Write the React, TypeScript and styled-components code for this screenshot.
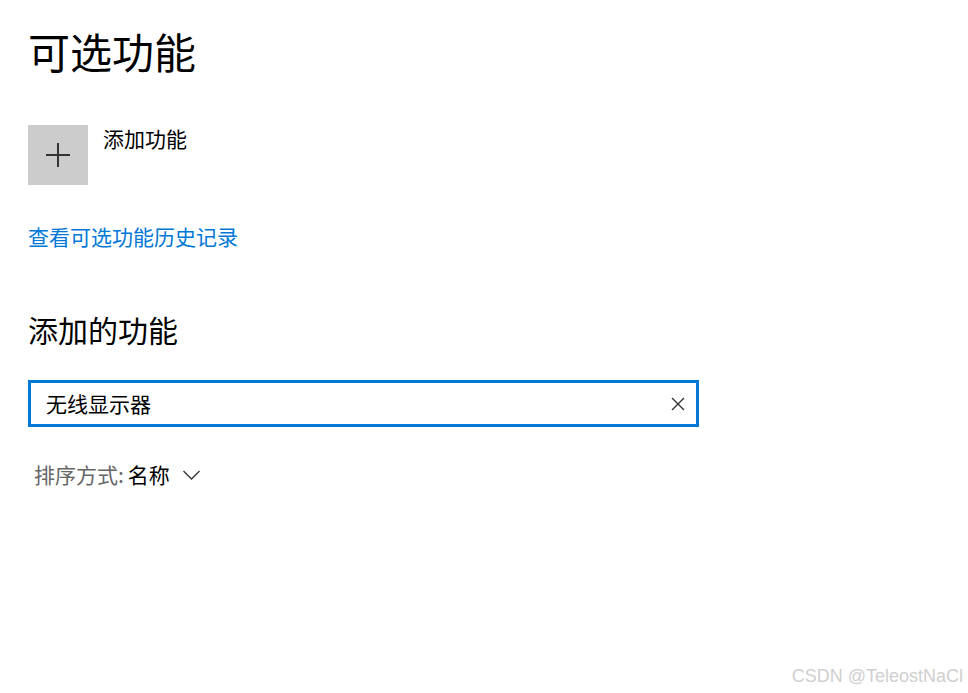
import React from "react";
import styled, { createGlobalStyle } from "styled-components";

const GlobalStyle = createGlobalStyle`
  html, body { margin: 0; padding: 0; background: #ffffff; }
  body {
    font-family: "Noto Sans CJK SC", "Noto Sans", sans-serif;
    color: #000000;
  }
`;

const Page = styled.div`
  position: relative;
  min-height: 100vh;
  box-sizing: border-box;
  padding: 30px 0 0 28px;
  display: flex;
  flex-direction: column;
  align-items: flex-start;
`;

const Title = styled.h1`
  margin: 0;
  font-size: 42px;
  line-height: 42px;
  font-weight: 400;
`;

const AddRow = styled.div`
  margin-top: 53px;
  display: flex;
  align-items: flex-start;
  gap: 15px;
`;

const AddTile = styled.div`
  width: 60px;
  height: 60px;
  background: #cccccc;
  display: flex;
  align-items: center;
  justify-content: center;
`;

const AddLabel = styled.span`
  margin-top: 3px;
  font-size: 21px;
  line-height: 21px;
`;

const HistoryLink = styled.a`
  margin-top: 41px;
  font-size: 21px;
  line-height: 21px;
  color: #0078d7;
  text-decoration: none;
  cursor: pointer;
`;

const Subtitle = styled.h2`
  margin: 67px 0 0;
  font-size: 30px;
  line-height: 30px;
  font-weight: 400;
`;

const SearchBox = styled.div`
  margin-top: 36px;
  width: 671px;
  height: 47px;
  box-sizing: border-box;
  border: 3px solid #0078d7;
  display: flex;
  align-items: center;
  padding: 0 11px 0 15px;
`;

const SearchText = styled.span`
  flex: 1;
  font-size: 21px;
  line-height: 21px;
`;

const SortRow = styled.div`
  margin: 37px 0 0 6px;
  display: flex;
  align-items: center;
  font-size: 21px;
  line-height: 21px;
`;

const SortLabel = styled.span`
  color: #666666;
`;

const SortValue = styled.span`
  margin-left: 4px;
  color: #000000;
`;

const Chevron = styled.svg`
  margin-left: 13px;
`;

const Watermark = styled.div`
  position: absolute;
  right: 5px;
  bottom: 6px;
  font-family: "Liberation Sans", Arial, sans-serif;
  font-size: 18px;
  color: #cfcfcf;
`;

export default function App() {
  return (
    <>
      <GlobalStyle />
      <Page>
        <Title>可选功能</Title>
        <AddRow>
          <AddTile>
            <svg width="24" height="24" viewBox="0 0 24 24">
              <path d="M12 0V24M0 12H24" stroke="#333" strokeWidth="2" fill="none" />
            </svg>
          </AddTile>
          <AddLabel>添加功能</AddLabel>
        </AddRow>
        <HistoryLink>查看可选功能历史记录</HistoryLink>
        <Subtitle>添加的功能</Subtitle>
        <SearchBox>
          <SearchText>无线显示器</SearchText>
          <svg width="14" height="14" viewBox="0 0 14 14">
            <path d="M1 1L13 13M13 1L1 13" stroke="#333" strokeWidth="1.4" fill="none" />
          </svg>
        </SearchBox>
        <SortRow>
          <SortLabel>排序方式:</SortLabel>
          <SortValue>名称</SortValue>
          <Chevron width="17" height="10" viewBox="0 0 17 10">
            <path d="M0.5 1L8.5 9L16.5 1" stroke="#333" strokeWidth="1.3" fill="none" />
          </Chevron>
        </SortRow>
        <Watermark>CSDN @TeleostNaCl</Watermark>
      </Page>
    </>
  );
}
